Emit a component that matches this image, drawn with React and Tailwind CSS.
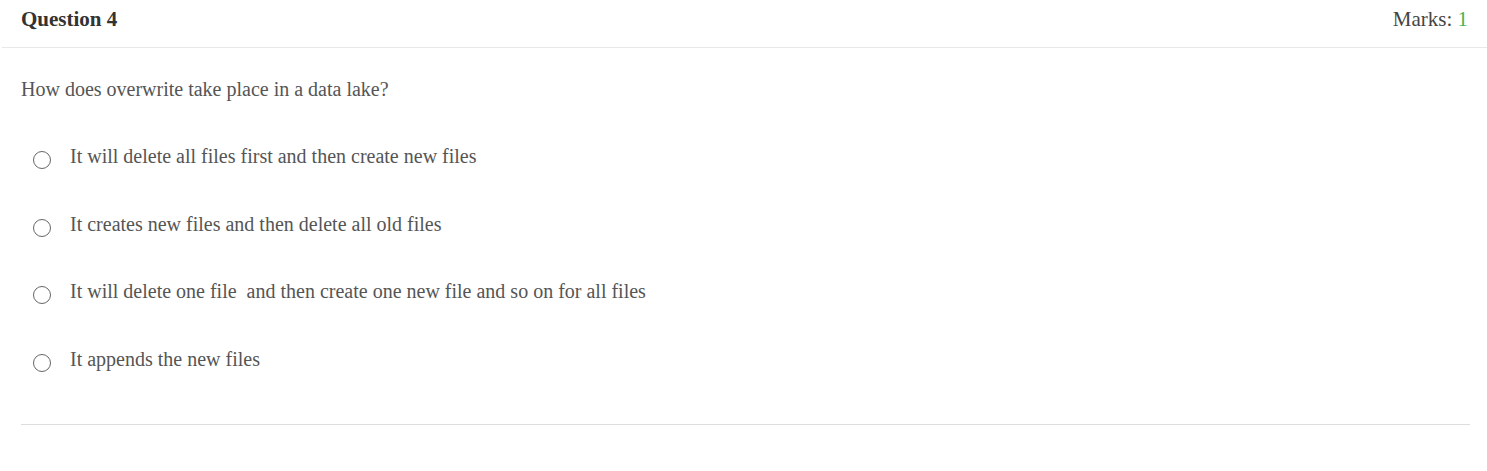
import React from "react";

const options = [
  "It will delete all files first and then create new files",
  "It creates new files and then delete all old files",
  "It will delete one file\u00a0 and then create one new file and so on for all files",
  "It appends the new files",
];

const App = () => {
  return (
    <div className="w-[1487px] h-[471px] bg-white font-['Liberation_Serif',serif]">
      <div className="ml-[2px] flex items-start justify-between border-b border-[#e8e8e8] pl-[19px] pr-[19px] h-[48px] pt-[6px]">
        <span className="text-[21px] leading-[26px] font-bold text-[#333]">Question 4</span>
        <span className="text-[21px] leading-[26px] text-[#444]">
          Marks: <span className="text-[#4caf50]">1</span>
        </span>
      </div>
      <div className="px-[21px] pr-[17px]">
        <p className="mt-[29px] text-[20px] leading-[24px] text-[#555]">How does overwrite take place in a data lake?</p>
        <div className="mt-[43px] flex flex-col gap-[43.5px] pl-[12px]">
          {options.map((opt) => (
            <label key={opt} className="flex items-center gap-[19px] h-[24px] text-[20px] leading-[24px] text-[#555]">
              <span className="mt-[8px] h-[18px] w-[18px] rounded-full border-[1.5px] border-[#666] shrink-0" />
              <span>{opt}</span>
            </label>
          ))}
        </div>
        <div className="mt-[53px] border-b border-[#ddd]" />
      </div>
    </div>
  );
};

export default App;
